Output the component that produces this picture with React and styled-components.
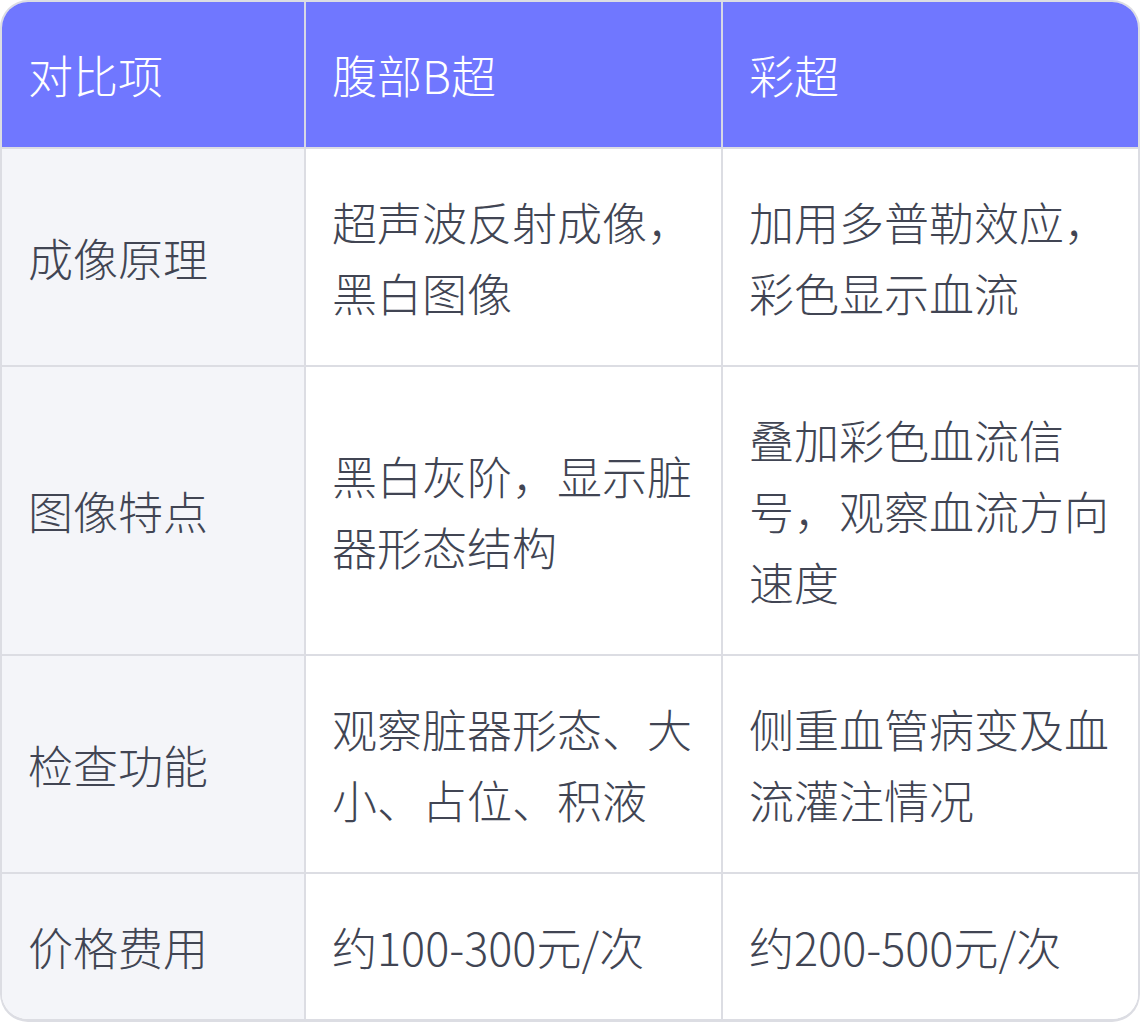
import React from "react";
import styled, { createGlobalStyle } from "styled-components";

const GlobalStyle = createGlobalStyle`
  html, body {
    margin: 0;
    padding: 0;
    background: #ffffff;
  }
  body {
    font-family: "Noto Sans CJK SC", "Noto Sans", sans-serif;
  }
`;

const rows = [
  {
    item: "成像原理",
    b: "超声波反射成像，黑白图像",
    color: "加用多普勒效应，彩色显示血流",
  },
  {
    item: "图像特点",
    b: "黑白灰阶，显示脏器形态结构",
    color: "叠加彩色血流信号，观察血流方向速度",
  },
  {
    item: "检查功能",
    b: "观察脏器形态、大小、占位、积液",
    color: "侧重血管病变及血流灌注情况",
  },
  {
    item: "价格费用",
    b: "约100-300元/次",
    color: "约200-500元/次",
  },
];

const App = () => {
  return (
    <>
      <GlobalStyle />
      <Wrapper>
        <Table>
          <colgroup>
            <col style={{ width: 304 }} />
            <col style={{ width: 417 }} />
            <col style={{ width: 415 }} />
          </colgroup>
          <thead>
            <tr>
              <HeadCell>对比项</HeadCell>
              <HeadCell>腹部B超</HeadCell>
              <HeadCell $last>彩超</HeadCell>
            </tr>
          </thead>
          <tbody>
            {rows.map((row, index) => (
              <tr key={row.item}>
                <Cell $label $bottom={index === rows.length - 1}>
                  {row.item}
                </Cell>
                <Cell $bottom={index === rows.length - 1}>{row.b}</Cell>
                <Cell $last $bottom={index === rows.length - 1}>
                  {row.color}
                </Cell>
              </tr>
            ))}
          </tbody>
        </Table>
      </Wrapper>
    </>
  );
};

export default App;

const Wrapper = styled.div`
  width: 1140px;
  box-sizing: border-box;
  border: 2px solid #dcdde3;
  border-bottom-width: 3px;
  border-radius: 28px;
  overflow: hidden;
  background: #ffffff;
`;

const Table = styled.table`
  width: 1136px;
  border-collapse: separate;
  border-spacing: 0;
  table-layout: fixed;
`;

const HeadCell = styled.th`
  background-color: #7077ff;
  color: #ffffff;
  font-size: 45px;
  font-weight: 300;
  line-height: 71px;
  text-align: left;
  padding: 37px 20px 37px 26px;
  border-right: ${({ $last }) => ($last ? "none" : "2px solid #d6d8e6")};
  border-bottom: 2px solid #dcdde3;
`;

const Cell = styled.td`
  background-color: ${({ $label }) => ($label ? "#f4f5f9" : "#ffffff")};
  color: #414553;
  font-size: 45px;
  font-weight: 300;
  line-height: 71px;
  vertical-align: middle;
  padding: 37px 20px 37px 26px;
  word-break: break-all;
  border-right: ${({ $last }) => ($last ? "none" : "2px solid #dcdde3")};
  border-bottom: ${({ $bottom }) => ($bottom ? "none" : "2px solid #dcdde3")};
`;
